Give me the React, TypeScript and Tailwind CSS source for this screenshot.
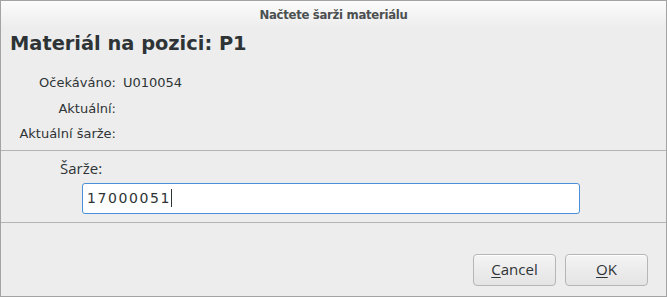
import React from "react"

const labelFont = { fontFamily: '"DejaVu Sans", sans-serif' }

const InfoRow = ({ label, value }: { label: string; value?: string }) => (
  <div className="flex h-[25.5px] items-center">
    <span className="w-[115px] text-right">{label}</span>
    <span className="pl-[7px]">{value}</span>
  </div>
)

const DialogButton = ({ mnemonic, rest }: { mnemonic: string; rest: string }) => (
  <button className="h-[32px] w-[83px] rounded-[4px] border border-[#b6b6b6] bg-gradient-to-b from-[#f4f4f4] to-[#e4e4e4] text-[15px] text-[#2e3436] shadow-[inset_0_1px_0_#ffffff]">
    <span className="underline underline-offset-2">{mnemonic}</span>
    {rest}
  </button>
)

export default function App() {
  return (
    <div
      className="flex h-[297px] w-[667px] flex-col border border-[#a3a3a3] bg-[#ededed] text-[#2e3436]"
      style={labelFont}
    >
      <div className="flex h-[27px] shrink-0 items-center justify-center bg-gradient-to-b from-[#fbfbfb] to-[#ededed]">
        <span
          className="text-[13px] font-bold tracking-[-0.3px] text-[#4b4f50]"
          style={{ fontFamily: '"DejaVu Sans Condensed", "DejaVu Sans", sans-serif' }}
        >
          Načtete šarži materiálu
        </span>
      </div>

      <div className="pl-[9px] pt-[4px] text-[19.4px] font-bold leading-[23px]">
        Materiál na pozici: P1
      </div>

      <div className="mt-[15px] flex flex-col text-[13px]">
        <InfoRow label="Očekáváno:" value="U010054" />
        <InfoRow label="Aktuální:" />
        <InfoRow label="Aktuální šarže:" />
      </div>

      <div className="mt-[3px] border-t border-[#b4b4b4]" />

      <div className="flex flex-col pl-[59px] pt-[8px]">
        <span
          className="text-[15px] leading-[18px]"
          style={{ fontFamily: '"Open Sans", sans-serif' }}
        >
          Šarže:
        </span>
        <div className="ml-[22px] mt-[6px] flex h-[31px] w-[498px] items-center rounded-[3px] border border-[#4a90d9] bg-white pl-[4px]">
          <span className="text-[14px] tracking-[1.6px] text-[#2e3436]">17000051</span>
          <span className="h-[18px] w-px bg-[#2e3436]" />
        </div>
      </div>

      <div className="mt-[8px] border-t border-[#b4b4b4]" />

      <div
        className="flex flex-1 items-start justify-end gap-[9px] pr-[18px] pt-[31px]"
        style={{ fontFamily: '"Open Sans", sans-serif' }}
      >
        <DialogButton mnemonic="C" rest="ancel" />
        <DialogButton mnemonic="O" rest="K" />
      </div>
    </div>
  )
}
